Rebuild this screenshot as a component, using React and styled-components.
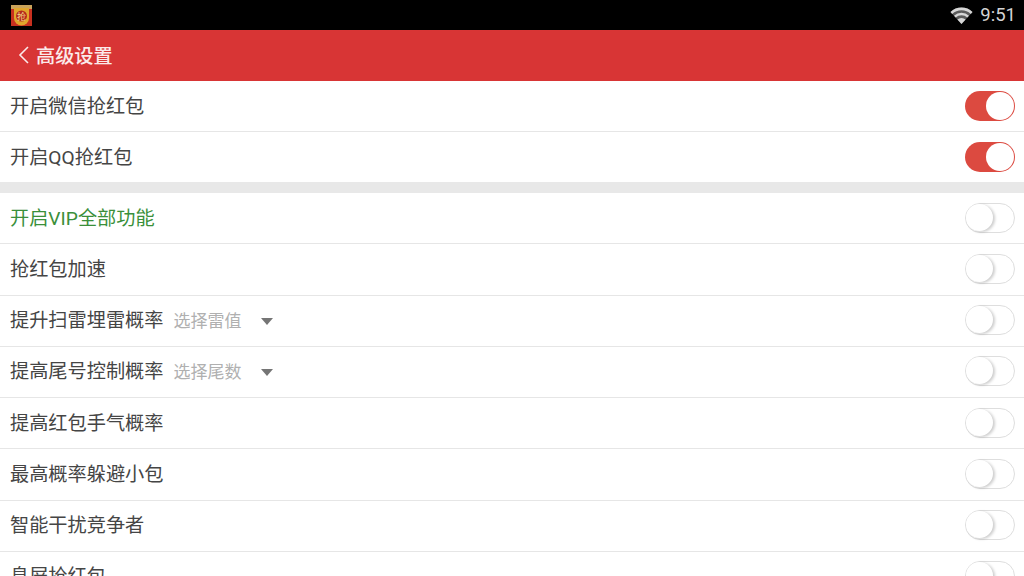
import React from 'react';
import styled, { createGlobalStyle } from 'styled-components';

const Global = createGlobalStyle`
  html, body { margin: 0; padding: 0; background: #fff; height: 100%; overflow: hidden; }
  * { box-sizing: border-box; }
  #root { font-family: Roboto, "Noto Sans CJK SC", sans-serif; }
`;
const Page = styled.div`width: 1024px; height: 576px; overflow: hidden; display: flex; flex-direction: column; background: #fff;`;
const StatusBar = styled.div`height: 30px; flex: none; background: #000; display: flex; align-items: center; justify-content: space-between; padding: 0 8px 0 11px;`;
const StatusRight = styled.div`display: flex; align-items: center; gap: 7px; color: #d0d0d0;`;
const Time = styled.span`font-family: Roboto, sans-serif; font-size: 18.5px; line-height: 30px; color: #d4d4d4;`;
const Header = styled.div`height: 51px; flex: none; background: #d83535; display: flex; align-items: center; padding-left: 18px; gap: 6px; color: #fff;`;
const Title = styled.span`font-size: 19.2px; line-height: 26px; color: #fbeaea; font-weight: 500; margin-top: 3px;`;
const Group = styled.div`display: flex; flex-direction: column; flex: none;`;
const Gap = styled.div`height: 11px; flex: none; background: #e8e8e8;`;
const Row = styled.div`height: ${p => p.$last ? '49.75px' : '51.25px'}; flex: none; display: flex; align-items: center; justify-content: space-between; padding: 0 9px 1px 10px; border-bottom: ${p => p.$last ? 'none' : '1px solid #e6e6e6'};`;
const Left = styled.div`display: flex; align-items: center; padding-top: 2px;`;
const Label = styled.span`font-size: 19.2px; line-height: 26px; color: ${p => p.$green ? '#3a8f3a' : '#454545'};`;
const Hint = styled.span`font-size: 17px; line-height: 24px; color: #b0b0b0; margin-left: 10px;`;
const Caret = styled.span`width: 0; height: 0; margin-left: 19px; border-left: 6.5px solid transparent; border-right: 6.5px solid transparent; border-top: 7px solid #757575;`;
const Track = styled.div`position: relative; width: 50px; height: 30px; flex: none; border-radius: 15px; background: ${p => p.$on ? '#dc4a40' : '#fff'}; border: ${p => p.$on ? 'none' : '1.5px solid #dedede'};`;
const Knob = styled.div`
  position: absolute; border-radius: 50%; background: #fff;
  ${p => p.$on
    ? 'width: 28px; height: 28px; top: 1px; right: 1px;'
    : 'width: 27px; height: 27px; top: 0; left: 0; box-shadow: 2px 1px 3px rgba(0,0,0,0.2);'}
`;

function Toggle({ on }) { return <Track $on={on}><Knob $on={on} /></Track>; }

function SettingRow({ label, hint, green, on, last }) {
  return (
    <Row $last={last}>
      <Left>
        <Label $green={green}>{label}</Label>
        {hint && <Hint>{hint}</Hint>}
        {hint && <Caret />}
      </Left>
      <Toggle on={on} />
    </Row>
  );
}

const AppIcon = () => (
  <svg width="21" height="21" viewBox="0 0 21 21">
    <rect width="21" height="21" fill="#c8301f" />
    <path d="M0 0h21v4H0z" fill="#c9a25a" />
    <path d="M3 3h15v10a7.5 7.5 0 0 1-15 0z" fill="#e0a52c" />
    <circle cx="10.5" cy="11" r="5.5" fill="#b52a1c" />
    <text x="10.5" y="14.5" textAnchor="middle" fontSize="9" fill="#f6d98a" fontFamily='"Noto Sans CJK SC", sans-serif'>抢</text>
  </svg>
);

const Wifi = () => (
  <svg width="23" height="18" viewBox="0 0 23 18">
    <path d="M0.5 6 A16 16 0 0 1 22.5 6 L11.5 18 Z" fill="#5a5a5a" />
    <path d="M0.5 6 A16 16 0 0 1 22.5 6 L20.8 7.9 A13.5 13.5 0 0 0 2.2 7.9 Z" fill="#d6d6d6" />
    <path d="M4 9.8 A11 11 0 0 1 19 9.8 L17.3 11.6 A8.5 8.5 0 0 0 5.7 11.6 Z" fill="#d6d6d6" />
    <path d="M7.4 13.5 A6 6 0 0 1 15.6 13.5 L11.5 18 Z" fill="#d6d6d6" />
  </svg>
);

const Back = () => (
  <svg width="12" height="20" viewBox="0 0 12 20" style={{ marginBottom: 2 }}>
    <path d="M10 2 L2 10 L10 18" fill="none" stroke="#fbeaea" strokeWidth="1.6" />
  </svg>
);

export default function App() {
  return (
    <Page>
      <Global />
      <StatusBar>
        <AppIcon />
        <StatusRight><Wifi /><Time>9:51</Time></StatusRight>
      </StatusBar>
      <Header><Back /><Title>高级设置</Title></Header>
      <Group>
        <SettingRow label="开启微信抢红包" on />
        <SettingRow label="开启QQ抢红包" on last />
      </Group>
      <Gap />
      <Group>
        <SettingRow label="开启VIP全部功能" green />
        <SettingRow label="抢红包加速" />
        <SettingRow label="提升扫雷埋雷概率" hint="选择雷值" />
        <SettingRow label="提高尾号控制概率" hint="选择尾数" />
        <SettingRow label="提高红包手气概率" />
        <SettingRow label="最高概率躲避小包" />
        <SettingRow label="智能干扰竞争者" />
        <SettingRow label="息屏抢红包" />
      </Group>
    </Page>
  );
}
